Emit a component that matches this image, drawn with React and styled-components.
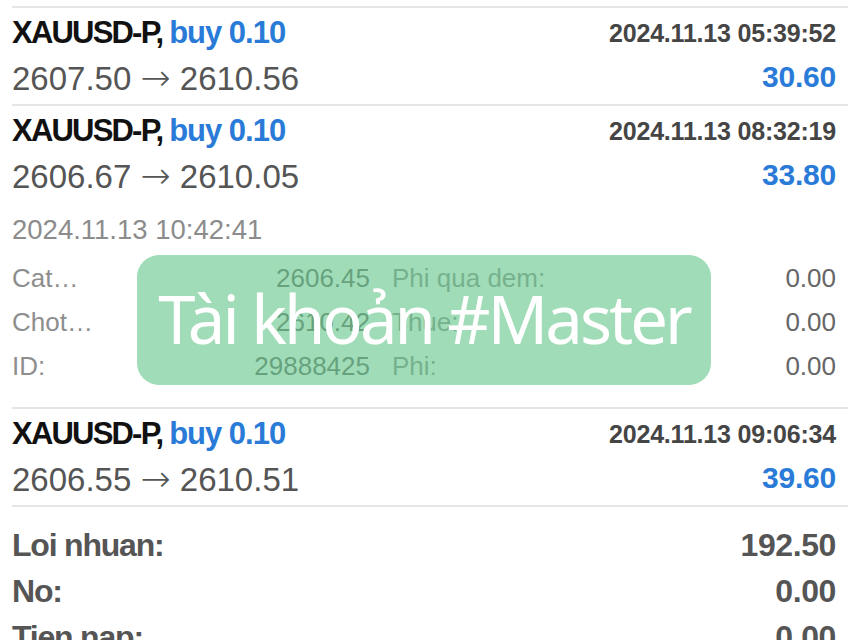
import React from "react";
import styled, { createGlobalStyle } from "styled-components";

const Global = createGlobalStyle`
  html, body { margin: 0; padding: 0; background: #ffffff; }
  body { font-family: "Liberation Sans", Arial, sans-serif; overflow: hidden; }
`;

const Page = styled.div`
  width: 848px;
  height: 640px;
  overflow: hidden;
  box-sizing: border-box;
  padding: 6px 12px 0 12px;
  background: #fff;
`;

const Divider = styled.div`
  height: 2px;
  background: #e6e6e6;
  margin-right: -12px;
`;

const Trade = styled.section`
  display: flex;
  flex-direction: column;
  padding: 3px 0 ${(p) => (p.$expanded ? 0 : 5)}px 0;
`;

const Line = styled.div`
  display: flex;
  align-items: center;
  justify-content: space-between;
  height: 44px;
`;

const Title = styled.span`
  font-weight: 700;
  font-size: 31px;
  line-height: 44px;
  color: #111;
  letter-spacing: -1.8px;
`;

const Buy = styled.span`
  color: #2a7bd8;
  letter-spacing: -1px;
`;

const Time = styled.span`
  font-weight: 700;
  font-size: 25px;
  color: #454545;
  letter-spacing: -0.2px;
`;

const Price = styled.span`
  font-size: 33px;
  color: #555;
`;

const Arrow = styled.span`
  font-family: "DejaVu Sans", sans-serif;
  font-size: 36px;
  font-weight: 300;
  color: #555;
`;

const Profit = styled.span`
  font-weight: 700;
  font-size: 30px;
  color: #2a7bd8;
  letter-spacing: -0.2px;
`;

const Details = styled.div`
  position: relative;
  padding: 11px 0 19px 0;
`;

const DetailDate = styled.div`
  height: 44px;
  line-height: 44px;
  font-size: 27.5px;
  color: #8c8c8c;
  margin-bottom: 4px;
`;

const Grid = styled.div`
  display: grid;
  grid-template-columns: 120px 216px 1fr auto;
  grid-auto-rows: 44px;
  column-gap: 22px;
  align-items: center;
  font-size: 26px;
`;

const Cell = styled.span`
  text-align: ${(p) => (p.$right ? "right" : "left")};
  color: ${(p) => (p.$value ? "#666" : "#8e8e8e")};
  white-space: nowrap;
`;

const Watermark = styled.div`
  position: absolute;
  left: 125px;
  top: 58px;
  width: 574px;
  height: 130px;
  border-radius: 22px;
  background: rgba(104, 198, 140, 0.62);
  display: flex;
  align-items: center;
  justify-content: center;
  color: #fff;
  font-family: "Noto Sans", "Open Sans", sans-serif;
  font-size: 67px;
  letter-spacing: -3px;
  padding-bottom: 4px;
  box-sizing: border-box;
`;

const Summary = styled.div`
  display: grid;
  grid-template-columns: 1fr auto;
  grid-auto-rows: 46px;
  align-items: center;
  padding-top: 15px;
`;

const SumLabel = styled.span`
  font-weight: 700;
  font-size: 32px;
  color: #555;
  letter-spacing: -1.2px;
`;

const SumValue = styled.span`
  font-weight: 700;
  font-size: 32px;
  color: #555;
  text-align: right;
  letter-spacing: -0.4px;
`;

function TradeRow({ time, open, close, profit, expanded, children }) {
  return (
    <Trade $expanded={expanded}>
      <Line>
        <Title>
          XAUUSD-P, <Buy>buy 0.10</Buy>
        </Title>
        <Time>{time}</Time>
      </Line>
      <Line>
        <Price>
          {open} <Arrow>→</Arrow> {close}
        </Price>
        <Profit>{profit}</Profit>
      </Line>
      {children}
    </Trade>
  );
}

const detailRows = [
  ["Cat…", "2606.45", "Phi qua dem:", "0.00"],
  ["Chot…", "2610.42", "Thue:", "0.00"],
  ["ID:", "29888425", "Phi:", "0.00"],
];

const summary = [
  ["Loi nhuan:", "192.50"],
  ["No:", "0.00"],
  ["Tien nap:", "0.00"],
];

export default function App() {
  return (
    <>
      <Global />
      <Page>
        <Divider />
        <TradeRow time="2024.11.13 05:39:52" open="2607.50" close="2610.56" profit="30.60" />
        <Divider />
        <TradeRow time="2024.11.13 08:32:19" open="2606.67" close="2610.05" profit="33.80" expanded>
          <Details>
            <DetailDate>2024.11.13 10:42:41</DetailDate>
            <Grid>
              {detailRows.map(([a, b, c, d]) => (
                <React.Fragment key={a}>
                  <Cell>{a}</Cell>
                  <Cell $right $value>{b}</Cell>
                  <Cell>{c}</Cell>
                  <Cell $right $value>{d}</Cell>
                </React.Fragment>
              ))}
            </Grid>
            <Watermark>Tài khoản #Master</Watermark>
          </Details>
        </TradeRow>
        <Divider />
        <TradeRow time="2024.11.13 09:06:34" open="2606.55" close="2610.51" profit="39.60" />
        <Divider />
        <Summary>
          {summary.map(([l, v]) => (
            <React.Fragment key={l}>
              <SumLabel>{l}</SumLabel>
              <SumValue>{v}</SumValue>
            </React.Fragment>
          ))}
        </Summary>
      </Page>
    </>
  );
}
